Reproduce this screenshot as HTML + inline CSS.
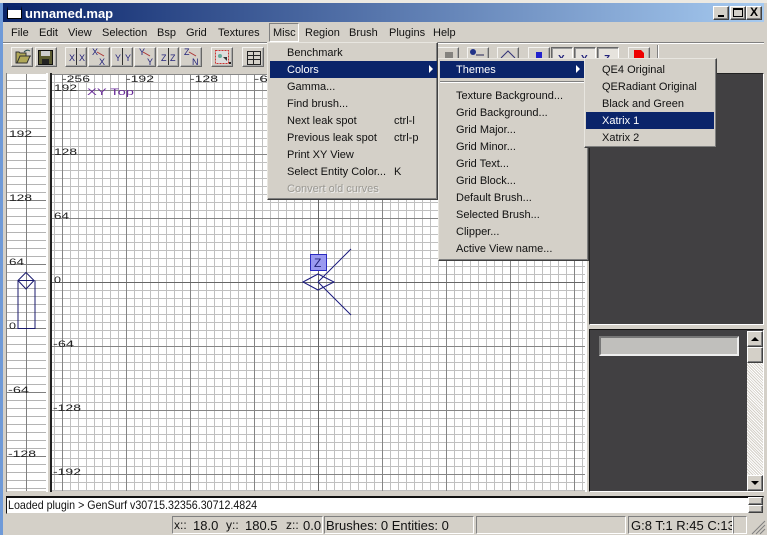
<!DOCTYPE html>
<html><head><meta charset="utf-8"><style>
html,body{margin:0;padding:0}
#w{position:relative;width:767px;height:535px;overflow:hidden;background:#d4d0c8;font:11px "Liberation Sans",sans-serif;color:#111}
#w div{position:absolute;box-sizing:border-box}
.t{position:absolute;white-space:nowrap;line-height:17px;height:17px;margin-top:1px}
.up{background:#d4d0c8;border:1px solid;border-color:#fff #404040 #404040 #fff;box-shadow:inset -1px -1px 0 #808080}
.in{border:1px solid;border-color:#808080 #fff #fff #808080}
.btn{width:22px;height:20px;top:47px;background:#d4d0c8;border:1px solid;border-color:#f4f3f0 #666 #666 #f4f3f0;box-shadow:inset -1px -1px 0 #aaa}
.on{background:#e6e3dd;border-color:#666 #fff #fff #666;box-shadow:inset 1px 1px 0 #999}
.menu{background:#d4d0c8;border:1px solid;border-color:#e8e6e0 #404040 #404040 #e8e6e0;box-shadow:inset -1px -1px 0 #808080}
.hl{background:#0a246a}
.g{font-size:9px;fill:#222}
svg{position:absolute;left:0;top:0}
</style></head><body><div id="w">

<div style="left:0;top:0;width:767px;height:3px;background:#ece9e2"></div>
<div style="left:0;top:3px;width:3px;height:532px;background:#6f9ad8"></div>
<div style="left:3px;top:3px;width:761px;height:19px;background:linear-gradient(90deg,#0a246a,#a6caf0)"></div>
<div style="left:7px;top:6px;width:15px;height:13px;background:#fff;border:1px solid #000;border-top:4px solid #0a246a"></div>
<div class="t" style="left:25px;top:4px;color:#fff;font-weight:bold;font-size:13px">unnamed.map</div>
<div class="up" style="left:713px;top:6px;width:16px;height:14px"><div style="left:4px;top:8px;width:6px;height:2px;background:#000"></div></div>
<div class="up" style="left:730px;top:6px;width:16px;height:14px"><div style="left:2px;top:1px;width:10px;height:9px;border:1px solid #000;border-top-width:2px"></div></div>
<div class="up" style="left:746px;top:6px;width:16px;height:14px"><div class="t" style="left:3px;top:-4px;font-weight:bold;font-size:12px;color:#000">X</div></div>

<span class="t" style="left:11px;top:24px">File</span>
<span class="t" style="left:39px;top:24px">Edit</span>
<span class="t" style="left:68px;top:24px">View</span>
<span class="t" style="left:102px;top:24px">Selection</span>
<span class="t" style="left:157px;top:24px">Bsp</span>
<span class="t" style="left:186px;top:24px">Grid</span>
<span class="t" style="left:218px;top:24px">Textures</span>
<div style="left:269px;top:23px;width:30px;height:19px;border:1px solid;border-color:#808080 #fff #fff #808080"></div>
<span class="t" style="left:273px;top:24px">Misc</span>
<span class="t" style="left:305px;top:24px">Region</span>
<span class="t" style="left:349px;top:24px">Brush</span>
<span class="t" style="left:389px;top:24px">Plugins</span>
<span class="t" style="left:433px;top:24px">Help</span>
<div style="left:3px;top:42px;width:761px;height:2px;background:#808080;border-bottom:1px solid #fff"></div>

<div class="btn" style="left:11px"></div><div class="btn" style="left:35px"></div>
<div class="btn" style="left:65px"></div><div class="btn" style="left:88px"></div><div class="btn" style="left:111px"></div><div class="btn" style="left:134px"></div><div class="btn" style="left:157px"></div><div class="btn" style="left:180px"></div>
<div class="btn" style="left:211px"></div><div class="btn" style="left:242px"></div>
<div class="btn" style="left:437px"></div><div class="btn" style="left:467px"></div><div class="btn" style="left:497px"></div>
<div class="btn" style="left:528px"></div><div class="btn on" style="left:551px"></div><div class="btn on" style="left:574px"></div><div class="btn on" style="left:597px"></div>
<div class="btn" style="left:628px"></div>
<div style="left:657px;top:45px;width:2px;height:24px;background:#808080;border-right:1px solid #fff"></div>

<svg width="767" height="72" style="z-index:1">
<path d="M16 63V52h3l1 1h6v3h4l-3 7z" fill="#b0a858" stroke="#333"/><path d="M17 63l3-7h11" fill="none" stroke="#333"/><path d="M24 52q3-3 6-1" fill="none" stroke="#355"/>
<rect x="38.500" y="50.500" width="14" height="14" fill="#5a5a30" stroke="#111"/><rect x="41" y="51" width="9" height="5" fill="#ccc"/><rect x="42" y="59" width="7" height="5" fill="#222"/>
<g font-family="Liberation Sans" font-size="9" fill="#22227a">
<text x="69" y="61">X</text><text x="79" y="61">X</text><path d="M76.500 48v17" stroke="#333"/>
<text x="92" y="55">X</text><text x="99" y="65">X</text><path d="M97 52l7 4" stroke="#a33"/>
<text x="115" y="61">Y</text><text x="125" y="61">Y</text><path d="M122.500 48v17" stroke="#333"/>
<text x="139" y="55">Y</text><text x="147" y="65">Y</text><path d="M143 52l7 4" stroke="#a33"/>
<text x="161" y="61">Z</text><text x="170" y="61">Z</text><path d="M168.500 48v17" stroke="#333"/>
<text x="184" y="55">Z</text><text x="192" y="65">N</text><path d="M189 52l7 4" stroke="#a33"/>
</g>
<rect x="215.500" y="50.500" width="13" height="13" fill="#ddd" stroke="#c33" stroke-dasharray="2 1"/><path d="M223 57l4 0 0 4z" fill="#333"/><circle cx="220" cy="56" r="2" fill="#6a9"/><rect x="229" y="62" width="2" height="2" fill="#222"/>
<path d="M247.500 51.500h13v13h-13zM247.500 55.500h13M253.500 51.500v13M247.500 59.500h13" fill="none" stroke="#222"/>
<path d="M445 53h8M445 55h8M445 57h8" stroke="#333"/>
<circle cx="473" cy="52" r="3" fill="#223388"/><path d="M476 55h8" stroke="#225"/>
<path d="M501 58l7-7 7 7" fill="none" stroke="#337"/>
<path d="M536 52h6v6h-6z" fill="#22c"/>
<g font-family="Liberation Sans" font-size="10" font-weight="bold" fill="#22227a"><text x="558" y="62">X</text><text x="581" y="62">Y</text><text x="604" y="62">Z</text></g>
<path d="M634 50h7l3 3v5h-10z" fill="#e00"/>
</svg>

<!-- left view -->
<div style="left:7px;top:74px;width:39px;height:417px;background-color:#fff;background-image:linear-gradient(#b4b4b4 1px,transparent 1px);background-size:8px 8px;background-position:0 6px"></div>
<div style="left:6px;top:73px;width:1px;height:419px;background:#808080"></div>
<div style="left:46px;top:73px;width:2px;height:419px;background:#fff"></div>
<div style="left:50px;top:73px;width:2px;height:419px;background:#222"></div>

<!-- xy view -->
<div style="left:52px;top:74px;width:533px;height:417px;background-color:#fff;background-image:linear-gradient(90deg,#858585 1px,transparent 1px),linear-gradient(#858585 1px,transparent 1px),linear-gradient(90deg,#c0c0c0 1px,transparent 1px),linear-gradient(#c0c0c0 1px,transparent 1px);background-size:64px 64px,64px 64px,8px 8px,8px 8px;background-position:10px 0,0 16px,2px 0,0 0"></div>
<div style="left:585px;top:73px;width:2px;height:419px;background:#fff"></div>

<svg width="767" height="535" style="z-index:1">
<path d="M7 264.500h39M7 328.500h39M7 136.500h39M7 200.500h39M7 392.500h39M7 456.500h39M26.500 74v417" stroke="#808080"/>
<path d="M318.500 74v417M52 282.500h533" stroke="#666"/>
<path d="M52 74.500h533" stroke="#888"/>
<g font-family="Liberation Sans" class="g">
<text x="62" y="82" textLength="28" lengthAdjust="spacingAndGlyphs">-256</text>
<text x="126" y="82" textLength="28" lengthAdjust="spacingAndGlyphs">-192</text>
<text x="190" y="82" textLength="28" lengthAdjust="spacingAndGlyphs">-128</text>
<text x="254" y="82" textLength="14" lengthAdjust="spacingAndGlyphs">-6</text>
<text x="54" y="91" textLength="23" lengthAdjust="spacingAndGlyphs">192</text>
<text x="54" y="155" textLength="23" lengthAdjust="spacingAndGlyphs">128</text>
<text x="54" y="219" textLength="15" lengthAdjust="spacingAndGlyphs">64</text>
<text x="54" y="283" textLength="7" lengthAdjust="spacingAndGlyphs">0</text>
<text x="53" y="347" textLength="21" lengthAdjust="spacingAndGlyphs">-64</text>
<text x="53" y="411" textLength="28" lengthAdjust="spacingAndGlyphs">-128</text>
<text x="53" y="475" textLength="28" lengthAdjust="spacingAndGlyphs">-192</text>
<text x="9" y="137" textLength="23" lengthAdjust="spacingAndGlyphs">192</text>
<text x="9" y="201" textLength="23" lengthAdjust="spacingAndGlyphs">128</text>
<text x="9" y="265" textLength="15" lengthAdjust="spacingAndGlyphs">64</text>
<text x="9" y="329" textLength="7" lengthAdjust="spacingAndGlyphs">0</text>
<text x="8" y="393" textLength="21" lengthAdjust="spacingAndGlyphs">-64</text>
<text x="8" y="457" textLength="28" lengthAdjust="spacingAndGlyphs">-128</text>
<text x="87" y="95" textLength="47" lengthAdjust="spacingAndGlyphs" style="fill:#6a2c9a">XY Top</text>
</g>
<path d="M18 280.500L26 272.500L34 280.500L26 289zM18 280.500H34M18 280.500V328.500H35V280.500" fill="none" stroke="#1a1a6e"/>
<rect x="310.500" y="254.500" width="16" height="16" fill="#9a9af0" stroke="#2a2ac0"/>
<text x="314" y="267" font-family="Liberation Sans" font-size="12" fill="#222277">Z</text>
<path d="M303 282L318 274L334 282L318 290zM318 282L351 249M318 282L351 315" fill="none" stroke="#1a1a7e"/>
</svg>

<!-- right panels -->
<div style="left:589px;top:73px;width:175px;height:252px;background:#414042;border:1px solid;border-color:#222 #fff #fff #222"></div>
<div style="left:589px;top:329px;width:175px;height:163px;background:#414042;border:1px solid;border-color:#111 #fff #fff #111"></div>
<div style="left:599px;top:336px;width:140px;height:20px;background:#c0bfbc;border:2px solid;border-color:#777 #eee #eee #777"></div>
<div style="left:747px;top:331px;width:16px;height:160px;background-color:#e2e0dc;background-image:repeating-linear-gradient(45deg,#fff 0 1px,#d4d0c8 1px 2px)"></div>
<div class="up" style="left:747px;top:331px;width:16px;height:16px"></div>
<div style="left:751px;top:337px;width:0;height:0;border:4px solid transparent;border-top:0;border-bottom:4px solid #000;z-index:2"></div>
<div class="up" style="left:747px;top:347px;width:16px;height:16px"></div>
<div class="up" style="left:747px;top:475px;width:16px;height:16px"></div>
<div style="left:751px;top:481px;width:0;height:0;border:4px solid transparent;border-bottom:0;border-top:4px solid #000;z-index:2"></div>

<!-- console -->
<div style="left:6px;top:496px;width:758px;height:18px;background:#fff;border:1px solid;border-color:#111 #d4d0c8 #d4d0c8 #111;border-top-width:2px"></div>
<span class="t" style="left:8px;top:496px;font-size:12px;z-index:2;transform:scaleX(.89);transform-origin:left">Loaded plugin &gt; GenSurf v30715.32356.30712.4824</span>
<div class="up" style="left:748px;top:497px;width:15px;height:8px"></div>
<div class="up" style="left:748px;top:505px;width:15px;height:8px"></div>

<!-- status -->
<div class="in" style="left:172px;top:516px;width:151px;height:18px"></div>
<div class="in" style="left:324px;top:516px;width:150px;height:18px"></div>
<div class="in" style="left:476px;top:516px;width:150px;height:18px"></div>
<div class="in" style="left:628px;top:516px;width:105px;height:18px;overflow:hidden"><span class="t" style="left:2px;top:-1px;font-size:13px">G:8 T:1 R:45 C:13</span></div>
<div class="in" style="left:733px;top:516px;width:14px;height:18px"></div>
<span class="t" style="left:174px;top:516px;font-size:12px">x::</span>
<span class="t" style="left:193px;top:516px;font-size:13px">18.0</span>
<span class="t" style="left:226px;top:516px;font-size:12px">y::</span>
<span class="t" style="left:245px;top:516px;font-size:13px">180.5</span>
<span class="t" style="left:286px;top:516px;font-size:12px">z::</span>
<span class="t" style="left:303px;top:516px;font-size:13px">0.0</span>
<span class="t" style="left:326px;top:516px;font-size:13px">Brushes: 0 Entities: 0</span>
<svg width="767" height="535"><path d="M752 534L765 521M756 534L765 525M760 534L765 529" stroke="#808080" fill="none"/></svg>

<!-- menus -->
<div class="menu" style="left:267px;top:42px;width:171px;height:158px;z-index:5"></div>
<div class="hl" style="left:270px;top:61px;width:167px;height:17px;z-index:5"></div>
<div style="z-index:6;left:0;top:0;width:767px;height:535px">
<span class="t" style="left:287px;top:44px">Benchmark</span>
<span class="t" style="left:287px;top:61px;color:#fff">Colors</span>
<span class="t" style="left:287px;top:78px">Gamma...</span>
<span class="t" style="left:287px;top:95px">Find brush...</span>
<span class="t" style="left:287px;top:112px">Next leak spot</span><span class="t" style="left:394px;top:112px">ctrl-l</span>
<span class="t" style="left:287px;top:129px">Previous leak spot</span><span class="t" style="left:394px;top:129px">ctrl-p</span>
<span class="t" style="left:287px;top:146px">Print XY View</span>
<span class="t" style="left:287px;top:163px">Select Entity Color...</span><span class="t" style="left:394px;top:163px">K</span>
<span class="t" style="left:287px;top:180px;color:#9a9892;text-shadow:1px 1px 0 #eee">Convert old curves</span>
<div style="left:429px;top:65px;width:0;height:0;border:4px solid transparent;border-right:0;border-left:4px solid #fff"></div>
</div>

<div class="menu" style="left:438px;top:58px;width:151px;height:203px;z-index:7"></div>
<div class="hl" style="left:440px;top:61px;width:144px;height:17px;z-index:7"></div>
<div style="left:440px;top:81px;width:146px;height:2px;background:#808080;border-bottom:1px solid #fff;z-index:7"></div>
<div style="z-index:8;left:0;top:0;width:767px;height:535px">
<span class="t" style="left:456px;top:61px;color:#fff">Themes</span>
<span class="t" style="left:456px;top:87px">Texture Background...</span>
<span class="t" style="left:456px;top:104px">Grid Background...</span>
<span class="t" style="left:456px;top:121px">Grid Major...</span>
<span class="t" style="left:456px;top:138px">Grid Minor...</span>
<span class="t" style="left:456px;top:155px">Grid Text...</span>
<span class="t" style="left:456px;top:172px">Grid Block...</span>
<span class="t" style="left:456px;top:189px">Default Brush...</span>
<span class="t" style="left:456px;top:206px">Selected Brush...</span>
<span class="t" style="left:456px;top:223px">Clipper...</span>
<span class="t" style="left:456px;top:240px">Active View name...</span>
<div style="left:576px;top:65px;width:0;height:0;border:4px solid transparent;border-right:0;border-left:4px solid #fff"></div>
</div>

<div class="menu" style="left:584px;top:58px;width:133px;height:90px;z-index:9"></div>
<div class="hl" style="left:586px;top:112px;width:128px;height:17px;z-index:9"></div>
<div style="z-index:10;left:0;top:0;width:767px;height:535px">
<span class="t" style="left:602px;top:61px">QE4 Original</span>
<span class="t" style="left:602px;top:78px">QERadiant Original</span>
<span class="t" style="left:602px;top:95px">Black and Green</span>
<span class="t" style="left:602px;top:112px;color:#fff">Xatrix 1</span>
<span class="t" style="left:602px;top:129px">Xatrix 2</span>
</div>

</div></body></html>
